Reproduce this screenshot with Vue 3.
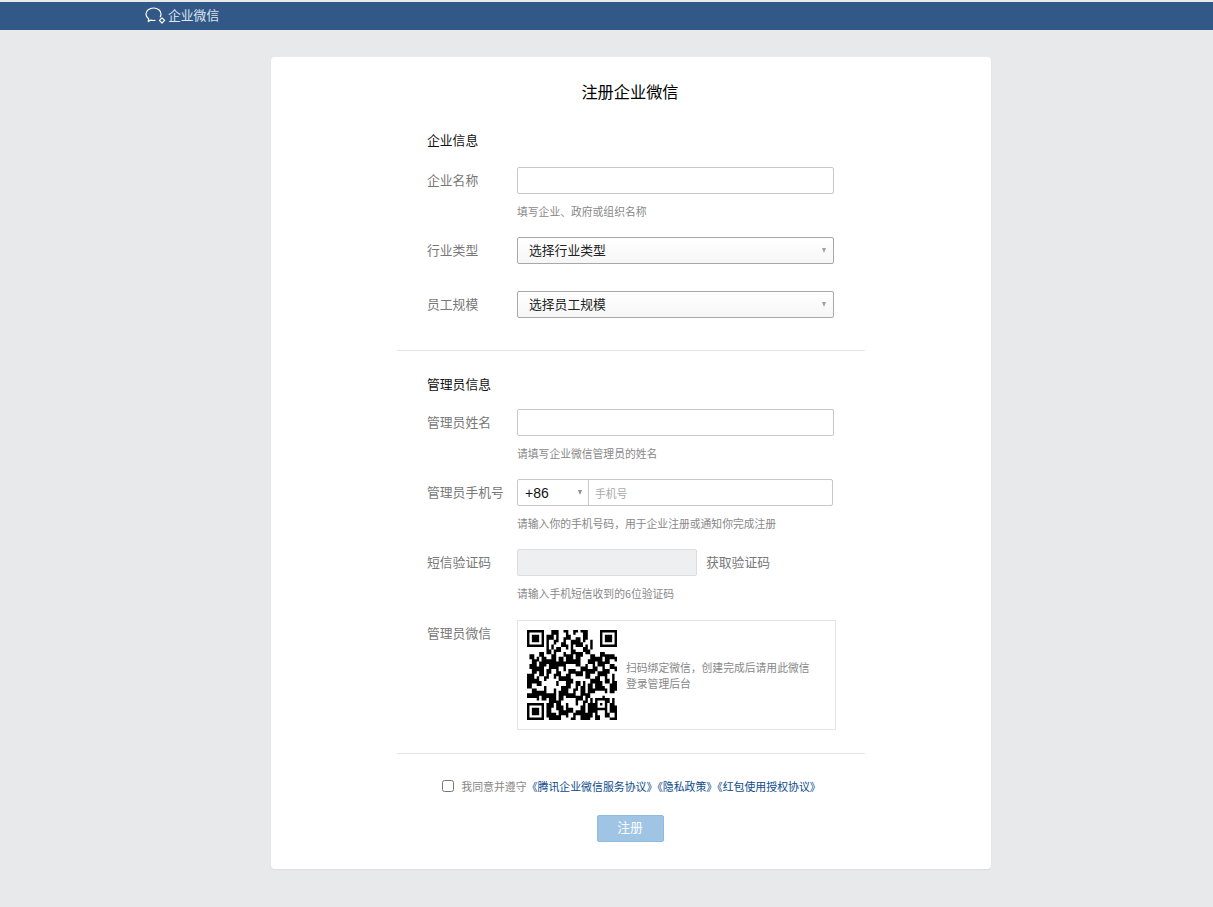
<script setup>
// 37 x 37 modules, finder and alignment squares are stamped on afterwards
const rows = [
  '0000000000111001100110111000000000000',
  '0000000011011000111100011010000000000',
  '0000000011100110110001111000000000000',
  '0000000000111001100111011110000000000',
  '0000000010011111001100110010000000000',
  '0000000011100011110111100000000000000',
  '0000000010101010101010101010000000000',
  '0000000001101100011100011000000000000',
  '0000000011011110001111011100000000000',
  '1110011011110001110011100111001111000',
  '0110001100111011111000110011110011110',
  '1011101111000110001111001100111000011',
  '0011110011110001111100110111001111001',
  '1100011110001111000111001100011111000',
  '0111100001110110000011111001111000111',
  '1100111000111001111000110001100110011',
  '0011110111000110011110001111000111001',
  '1000011001111100001111100011011100110',
  '1110011110011100110000111100111110011',
  '0011100111000111001100001111110000110',
  '1111001100000110111001110011000111011',
  '0001110011111000001111011000111001111',
  '1100011100001110110001100110111000110',
  '0111000111110011000110111001111100001',
  '0011011000011101100111000111000110111',
  '1100111110000111011000110011000011110',
  '1111000011111001111100011100111000001',
  '0001101100000110011111100110000111110',
  '0000000001110111000001111010000011011',
  '0000000011001100111110011100000011100',
  '0000000011100011100011000111000010111',
  '0000000000111110011100111001000011001',
  '0000000011001001111000000111111110110',
  '0000000001100111000111110011100001111',
  '0000000011110001100110001110011111000',
  '0000000010011100111000111001110000111',
  '0000000001110011001111001100011100110'
]

function stamp(grid, size, ox, oy) {
  for (let y = 0; y < size; y++) {
    for (let x = 0; x < size; x++) {
      const edge = x === 0 || y === 0 || x === size - 1 || y === size - 1
      const mid = size === 7
        ? x >= 2 && x <= 4 && y >= 2 && y <= 4
        : x === 2 && y === 2
      grid[oy + y][ox + x] = edge || mid ? '1' : '0'
    }
  }
}

// pair rows up so the modules clump instead of running in long streaks
const grid = rows.map((r, y) =>
  r.split('').map((c, x) => {
    const from = Math.max(0, y - (y + (x >> 2)) % 2)
    return rows[from][x]
  })
)
stamp(grid, 7, 0, 0)
stamp(grid, 7, 30, 0)
stamp(grid, 7, 0, 30)
stamp(grid, 5, 28, 28)

const qrPath = grid
  .map((r, y) => r.map((c, x) => (c === '1' ? `M${x} ${y}h1v1h-1z` : '')).join(''))
  .join('')
</script>

<template>
  <div class="page">
    <header class="topbar">
      <div class="brand">
        <svg class="logo" viewBox="0 0 22 18" width="22" height="18" fill="none" stroke="#fff">
          <path d="M15.300 9.800c.5-.8.700-1.700.7-2.700C16 3.700 12.900 1 8.600 1S1 3.700 1 7.100c0 2 1 3.700 2.700 4.900l-.4 2.600 2.600-1.500c.9.300 1.800.4 2.700.4.500 0 1 0 1.400-.1" stroke-width="1.200" stroke-linecap="round" stroke-linejoin="round" />
          <path d="M17 10.800l2.600 2.600-2.600 2.600-2.600-2.600z" stroke-width="1.200" stroke-linejoin="round" />
        </svg>
        <span>企业微信</span>
      </div>
    </header>

    <main class="card">
      <h1 class="title">注册企业微信</h1>

      <section class="block block-first">
        <h2 class="block-title">企业信息</h2>
        <div class="row">
          <label class="label">企业名称</label>
          <div class="field">
            <input class="input" type="text" />
            <p class="hint">填写企业、政府或组织名称</p>
          </div>
        </div>
        <div class="row row-select">
          <label class="label">行业类型</label>
          <div class="select-box">
            <select class="select"><option>选择行业类型</option></select>
          </div>
        </div>
        <div class="row row-select">
          <label class="label">员工规模</label>
          <div class="select-box">
            <select class="select"><option>选择员工规模</option></select>
          </div>
        </div>
      </section>

      <section class="block block-line">
        <h2 class="block-title admin-title">管理员信息</h2>
        <div class="row">
          <label class="label">管理员姓名</label>
          <div class="field">
            <input class="input" type="text" />
            <p class="hint">请填写企业微信管理员的姓名</p>
          </div>
        </div>
        <div class="row">
          <label class="label">管理员手机号</label>
          <div class="field">
            <div class="phone">
              <div class="area">+86</div>
              <input class="phone-input" type="text" placeholder="手机号" />
            </div>
            <p class="hint">请输入你的手机号码，用于企业注册或通知你完成注册</p>
          </div>
        </div>
        <div class="row row-code">
          <label class="label">短信验证码</label>
          <div class="field">
            <div class="code-line">
              <input class="code-input" type="text" disabled />
              <span class="code-link">获取验证码</span>
            </div>
            <p class="hint">请输入手机短信收到的6位验证码</p>
          </div>
        </div>
        <div class="row row-qr">
          <label class="label">管理员微信</label>
          <div class="qr-box">
            <svg class="qr" viewBox="0 0 37 37" width="90" height="90">
              <path :d="qrPath" fill="#000" />
            </svg>
            <p class="qr-text">扫码绑定微信，创建完成后请用此微信登录管理后台</p>
          </div>
        </div>
      </section>

      <section class="block-line foot">
        <label class="agree">
          <input class="check" type="checkbox" />
          <span>我同意并遵守</span>
          <a class="link">《腾讯企业微信服务协议》《隐私政策》《红包使用授权协议》</a>
        </label>
        <button class="submit" type="button">注册</button>
      </section>
    </main>
  </div>
</template>

<style>
html,
body {
  margin: 0;
  background: #e8e9eb;
}
</style>

<style scoped>
.page {
  height: 907px;
  box-sizing: border-box;
  padding-top: 2px;
  overflow: hidden;
  background: #e8e9eb;
  font-family: "Noto Sans CJK SC", "Liberation Sans", sans-serif;
  color: #787878;
  font-size: 12.8px;
}
.topbar {
  height: 28px;
  background: #325887;
  padding-left: 145px;
}
.brand {
  display: flex;
  align-items: center;
  height: 24px;
  color: #dfe6ef;
  font-size: 12.8px;
}
.logo {
  margin-right: 1px;
  margin-top: 3px;
}
.card {
  width: 720px;
  height: 812px;
  box-sizing: border-box;
  margin: 27px auto 0 271px;
  padding-top: 22px;
  background: #fff;
  border-radius: 4px;
  box-shadow: 0 1px 2px rgba(0, 0, 0, 0.06);
}
.title {
  margin: 0;
  padding-right: 2px;
  font-size: 16.2px;
  font-weight: 400;
  line-height: 24px;
  text-align: center;
  color: #000;
}
.block {
  width: 468px;
  box-sizing: border-box;
  margin: 0 126px;
  padding-left: 30px;
}
.block-first {
  padding-bottom: 5px;
}
.block-title {
  margin: 28px 0 18px;
  font-size: 12.8px;
  font-weight: 400;
  line-height: 18px;
  color: #111;
}
.admin-title {
  margin: 24px 0 16px;
}
.row {
  display: flex;
  margin-bottom: 18px;
}
.row-select {
  margin-bottom: 27px;
}
.row-code {
  margin-bottom: 18px;
}
.row-code .hint {
  margin-bottom: 1px;
}
.row-qr {
  margin-bottom: 23px;
}
.label {
  width: 90px;
  flex: none;
  line-height: 25px;
}
.field {
  display: flex;
  flex-direction: column;
}
.input {
  display: block;
  width: 317px;
  height: 27px;
  box-sizing: border-box;
  border: 1px solid #c8c8c8;
  border-radius: 2px;
  background: #fff;
  outline: none;
}
.hint {
  margin: 9px 0 0;
  font-size: 10.8px;
  line-height: 16px;
  color: #888;
}
.select-box {
  position: relative;
  width: 317px;
  height: 27px;
}
.select-box::after {
  content: "";
  position: absolute;
  right: 8px;
  top: 11px;
  border-left: 2.5px solid transparent;
  border-right: 2.5px solid transparent;
  border-top: 5px solid #a0a0a0;
}
.select {
  display: block;
  width: 100%;
  height: 100%;
  box-sizing: border-box;
  padding: 0 0 2px 11px;
  appearance: none;
  border: 1px solid #a8a8a8;
  border-radius: 2px;
  background: linear-gradient(#fff, #f6f6f6);
  color: #222;
  font-family: inherit;
  font-size: 12.8px;
  outline: none;
}
.phone {
  display: flex;
  width: 316px;
  height: 27px;
  box-sizing: border-box;
  border: 1px solid #c8c8c8;
  border-radius: 2px;
}
.area {
  position: relative;
  width: 71px;
  flex: none;
  box-sizing: border-box;
  padding-left: 7px;
  border-right: 1px solid #c8c8c8;
  font-family: "Liberation Sans", sans-serif;
  line-height: 26px;
  font-size: 14px;
  color: #111;
}
.area::after {
  content: "";
  position: absolute;
  right: 6px;
  top: 10px;
  border-left: 2.5px solid transparent;
  border-right: 2.5px solid transparent;
  border-top: 5px solid #909090;
}
.phone-input {
  flex: 1;
  min-width: 0;
  padding: 0 6px;
  border: 0;
  background: transparent;
  font-family: inherit;
  font-size: 10.8px;
  outline: none;
}
.phone-input::placeholder {
  color: #aaa;
}
.code-line {
  display: flex;
  align-items: center;
}
.code-input {
  width: 180px;
  height: 27px;
  box-sizing: border-box;
  border: 1px solid #dcdde0;
  border-radius: 2px;
  background: #eeeff1;
}
.code-link {
  margin-left: 9px;
  padding-bottom: 2px;
  font-size: 12.8px;
  line-height: 25px;
}
.qr-box {
  display: flex;
  align-items: center;
  width: 319px;
  height: 110px;
  box-sizing: border-box;
  padding-left: 9px;
  border: 1px solid #e4e4e4;
}
.qr {
  flex: none;
}
.qr-text {
  width: 190px;
  margin: 0 0 0 9px;
  font-size: 10.8px;
  line-height: 16px;
  color: #888;
}
.block-line {
  border-top: 1px solid #e4e4e4;
}
.foot {
  width: 468px;
  margin: 0 126px;
  display: flex;
  flex-direction: column;
  align-items: center;
}
.agree {
  display: flex;
  align-items: center;
  height: 20px;
  margin-top: 22px;
  margin-left: 1px;
  font-size: 10.9px;
  color: #888;
}
.check {
  width: 12px;
  height: 12px;
  margin: 0 7px 0 0;
}
.link {
  color: #0c4a8a;
}
.submit {
  width: 67px;
  height: 27px;
  margin-top: 19px;
  margin-right: 2px;
  padding: 0 0 5px;
  border: 1px solid #8fbbe0;
  border-radius: 2px;
  background: #a0c4e4;
  color: #fff;
  font-family: inherit;
  font-size: 12.8px;
}
</style>
